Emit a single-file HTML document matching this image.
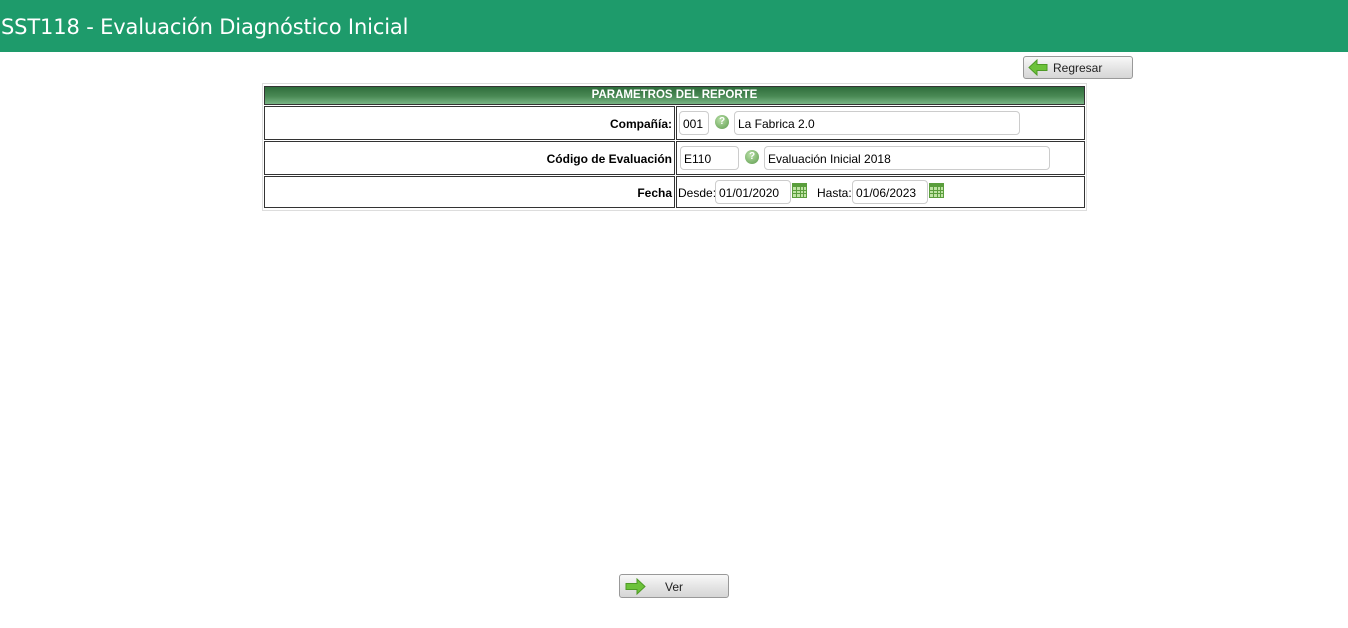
<!DOCTYPE html>
<html><head><meta charset="utf-8"><style>
*{margin:0;padding:0;box-sizing:border-box}
body{width:1348px;height:628px;background:#fff;font-family:"Liberation Sans",sans-serif;font-size:12px;color:#000;position:relative;overflow:hidden}
.a{position:absolute}
.hdr{left:0;top:0;width:1348px;height:52px;background:#1e9b6b}
.title{left:1px;top:15px;color:#fff;font-size:21px;font-family:"DejaVu Sans",sans-serif;letter-spacing:-0.15px}
.btn{border:1px solid #999;border-radius:3px;background:linear-gradient(#f8f8f8,#e2e2e2 60%,#d6d6d6);}
.cell{border:1px solid #333}
.inp{border:1px solid #ccc;border-radius:4px;background:#fff;padding:5px 3px 0;font-size:12px;height:24px;white-space:nowrap}
.lbl{font-weight:bold;text-align:right;right:0;padding-right:2px}
.help{width:14px;height:14px;border-radius:50%;background:radial-gradient(circle at 40% 35%,#b9e0a8,#5c9a4c);color:#fff;font-size:10px;font-weight:bold;text-align:center;line-height:14px}
.cal{width:15px;height:15px;border:1px solid #5a9e3c;background:#bfe3a4;background-image:linear-gradient(90deg,transparent 3px,#5a9e3c 3px,#5a9e3c 4px,transparent 4px,transparent 7px,#5a9e3c 7px,#5a9e3c 8px,transparent 8px,transparent 10px,#5a9e3c 10px,#5a9e3c 11px,transparent 11px),linear-gradient(#5a9e3c 3px,transparent 3px,transparent 6px,#5a9e3c 6px,#5a9e3c 7px,transparent 7px,transparent 9px,#5a9e3c 9px,#5a9e3c 10px,transparent 10px)}
</style></head><body>
<div class="a hdr"></div>
<div class="a title">SST118 - Evaluación Diagnóstico Inicial</div>

<div class="a btn" style="left:1023px;top:56px;width:110px;height:23px">
<svg class="a" style="left:4px;top:2px" width="20" height="17" viewBox="0 0 20 17"><path d="M1 8.5L9 1v4.5h10v6H9V16z" fill="#6cc23a" stroke="#4e9a26" stroke-width="1"/></svg>
<span class="a" style="left:29px;top:4px;color:#222">Regresar</span></div>

<div class="a" style="left:262px;top:83px;width:825px;height:128px;border:1px solid #ddd"></div>
<div class="a" style="left:264px;top:86px;width:821px;height:19px;border:1px solid #333;background:linear-gradient(#2f6e3c,#4a8a55 55%,#79b585);color:#fff;font-weight:bold;font-size:11.5px;text-align:center;line-height:17px">PARAMETROS DEL REPORTE</div>

<div class="a cell" style="left:264px;top:106px;width:411px;height:34px"><span class="a lbl" style="top:10px">Compañía:</span></div>
<div class="a cell" style="left:676px;top:106px;width:409px;height:34px"></div>
<div class="a cell" style="left:264px;top:141px;width:411px;height:34px"><span class="a lbl" style="top:10px">Código de Evaluación</span></div>
<div class="a cell" style="left:676px;top:141px;width:409px;height:34px"></div>
<div class="a cell" style="left:264px;top:176px;width:411px;height:32px"><span class="a lbl" style="top:9px">Fecha</span></div>
<div class="a cell" style="left:676px;top:176px;width:409px;height:32px"></div>

<div class="a inp" style="left:679px;top:111px;width:30px">001</div>
<div class="a help" style="left:715px;top:115px">?</div>
<div class="a inp" style="left:734px;top:111px;width:286px">La Fabrica 2.0</div>

<div class="a inp" style="left:680px;top:146px;width:59px">E110</div>
<div class="a help" style="left:745px;top:150px">?</div>
<div class="a inp" style="left:764px;top:146px;width:286px">Evaluación Inicial 2018</div>

<span class="a" style="left:678px;top:186px">Desde:</span>
<div class="a inp" style="left:715px;top:180px;width:76px">01/01/2020</div>
<div class="a cal" style="left:792px;top:183px"></div>
<span class="a" style="left:817px;top:186px">Hasta:</span>
<div class="a inp" style="left:852px;top:180px;width:76px">01/06/2023</div>
<div class="a cal" style="left:929px;top:183px"></div>

<div class="a btn" style="left:619px;top:574px;width:110px;height:24px">
<svg class="a" style="left:4px;top:3px" width="22" height="17" viewBox="0 0 22 17"><path d="M21 8.5L13 1v4.5H2v6h11V16z" fill="#6cc23a" stroke="#4e9a26" stroke-width="1"/></svg>
<span class="a" style="left:45px;top:5px;color:#222">Ver</span></div>
</body></html>
